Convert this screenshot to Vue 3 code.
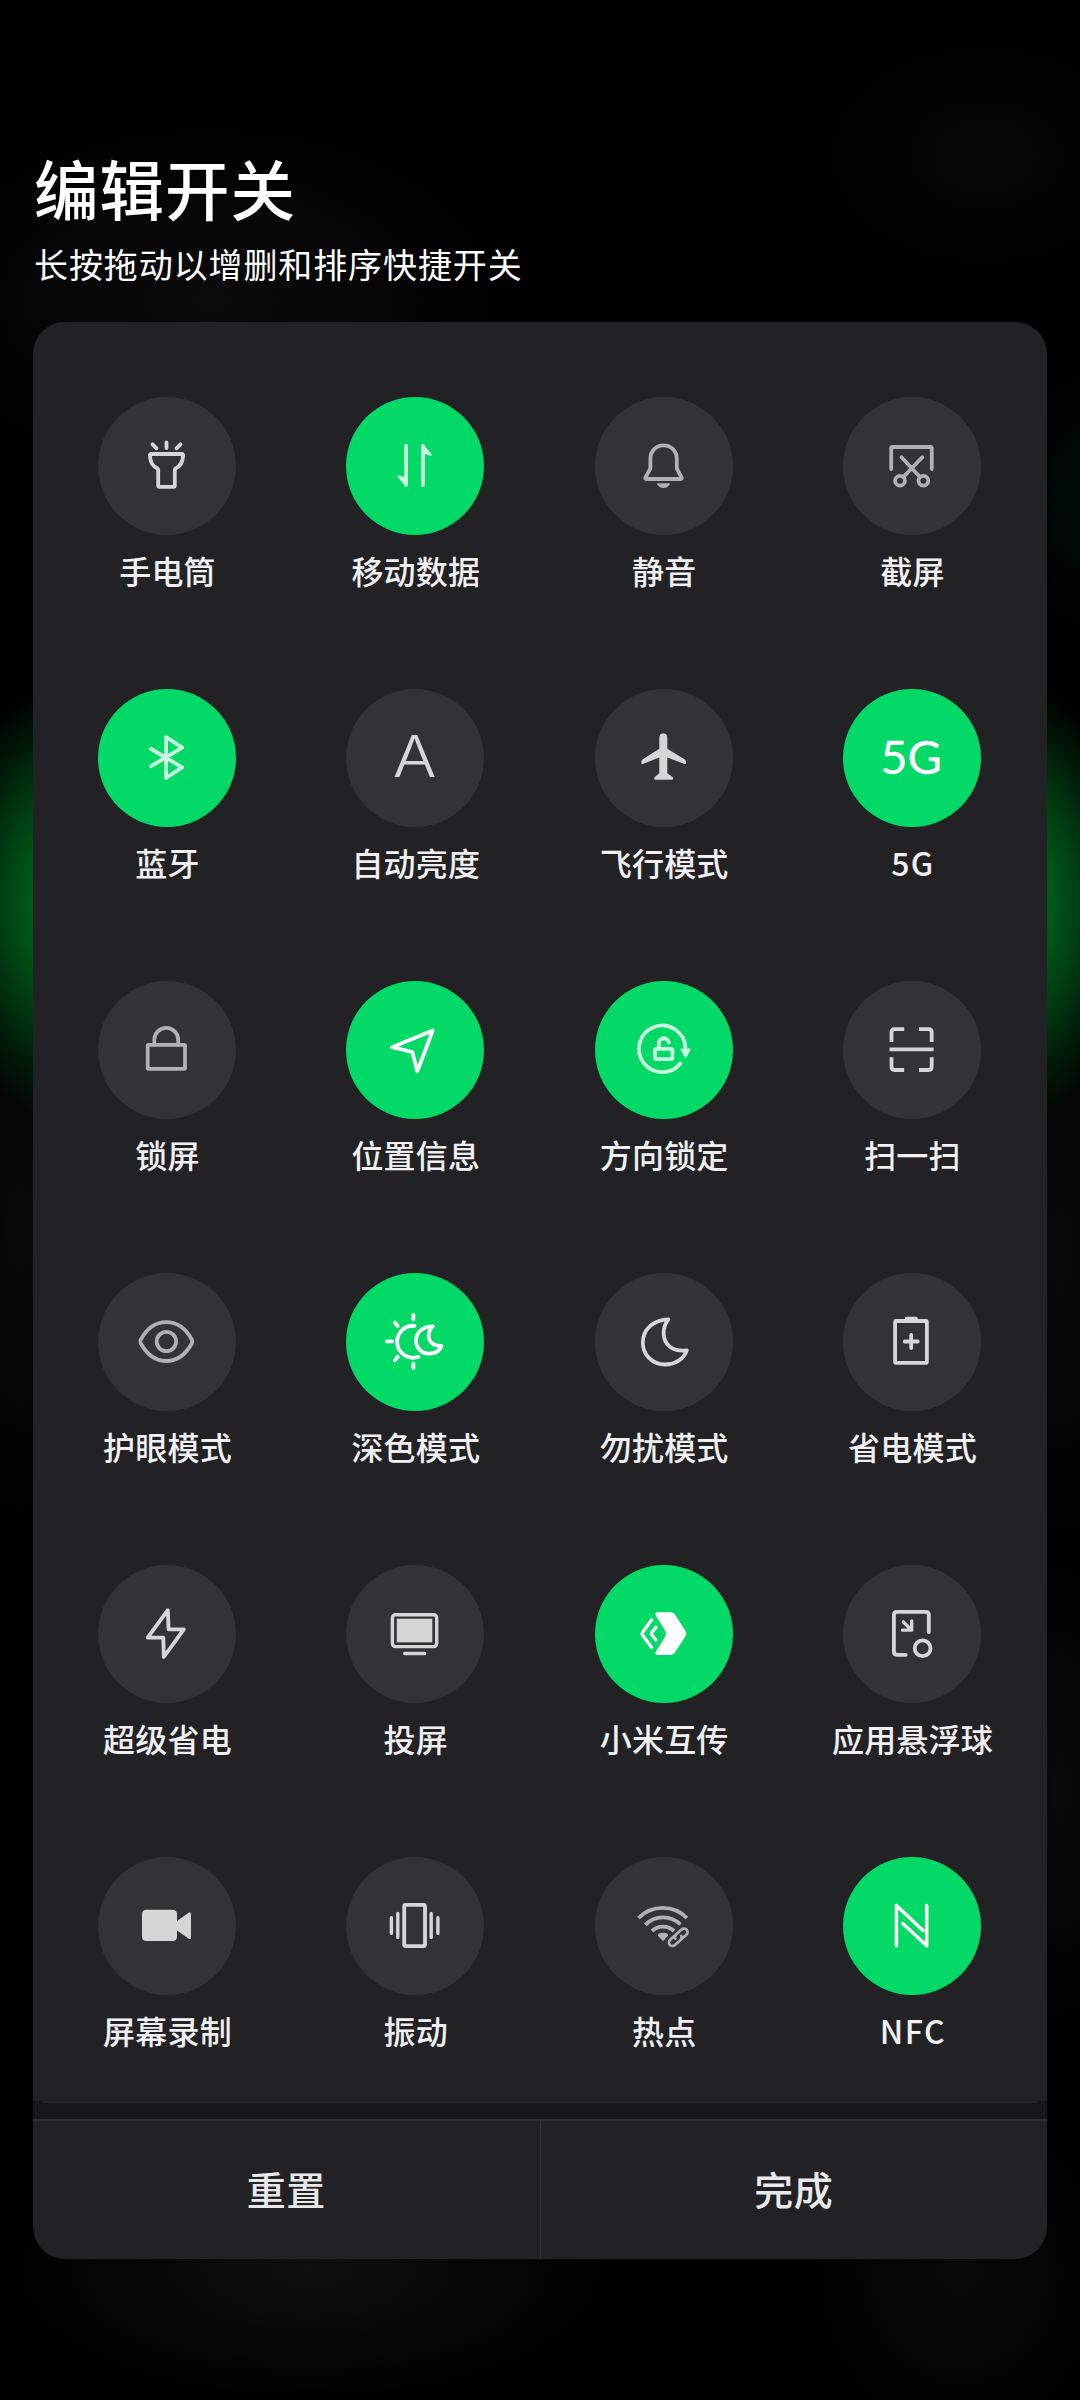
<script setup>
const tiles = [
  { id: 'torch', label: '手电筒', tone: 'bright' },
  { id: 'data', label: '移动数据', on: true, tone: 'mint' },
  { id: 'bell', label: '静音', tone: 'dim' },
  { id: 'screenshot', label: '截屏', tone: 'dim' },
  { id: 'bluetooth', label: '蓝牙', on: true, tone: 'mint' },
  { id: 'auto', label: '自动亮度', tone: 'bright' },
  { id: 'plane', label: '飞行模式', tone: 'bright' },
  { id: 'fiveg', label: '5G', on: true, tone: 'white', latin: true },
  { id: 'lock', label: '锁屏', tone: 'dim' },
  { id: 'location', label: '位置信息', on: true, tone: 'white' },
  { id: 'rotation', label: '方向锁定', on: true, tone: 'mint' },
  { id: 'scan', label: '扫一扫', tone: 'bright' },
  { id: 'eye', label: '护眼模式', tone: 'dim' },
  { id: 'dark', label: '深色模式', on: true, tone: 'white' },
  { id: 'moon', label: '勿扰模式', tone: 'bright' },
  { id: 'battery', label: '省电模式', tone: 'bright' },
  { id: 'bolt', label: '超级省电', tone: 'bright' },
  { id: 'cast', label: '投屏', tone: 'bright' },
  { id: 'share', label: '小米互传', on: true, tone: 'white' },
  { id: 'float', label: '应用悬浮球', tone: 'bright' },
  { id: 'record', label: '屏幕录制', tone: 'bright' },
  { id: 'vibrate', label: '振动', tone: 'bright' },
  { id: 'hotspot', label: '热点', tone: 'dim' },
  { id: 'nfc', label: 'NFC', on: true, tone: 'white', latin: true },
]
</script>

<template>
  <main class="screen">
    <header class="head">
      <h1>编辑开关</h1>
      <p>长按拖动以增删和排序快捷开关</p>
    </header>

    <section class="panel">
      <div class="grid">
        <div v-for="t in tiles" :key="t.id" class="tile">
          <div class="disc" :class="[t.tone, { on: t.on }]">
            <svg viewBox="0 0 138 138" width="138" height="138">
              <g v-if="t.id === 'torch'">
                <path d="M53.2 57H83.8Q85.2 57 85.1 58.5C84.8 65 82 69.500 77.500 71.500Q76.800 72 76.800 73V88.500Q76.800 89.800 75.500 89.800H61.500Q60.200 89.800 60.200 88.500V73Q60.200 72 59.500 71.500C55 69.500 52.200 65 51.900 58.500Q51.800 57 53.200 57Z" />
                <path d="M68.500 45.500V51M54.500 47.300L58.500 51.300M82.500 47.300L78.500 51.300" />
              </g>
              <g v-else-if="t.id === 'data'">
                <path d="M60 49V88M77 49V88" />
                <path class="solid" d="M60 88L52.500 79.300L60 82ZM77 49L84.600 57.700L77 55Z" stroke-width="2.400" />
              </g>
              <g v-else-if="t.id === 'bell'">
                <path d="M50.500 80.300Q49.600 82 51.500 82H85.500Q87.400 82 86.500 80.300L81.800 71.500V61.500A13.200 13.200 0 0 0 55.400 61.500V71.500Z" />
                <path class="fill" d="M61.700 86.300H75.200Q73.500 91 68.500 91T61.700 86.300Z" />
              </g>
              <g v-else-if="t.id === 'screenshot'">
                <path d="M48.200 72V51.500Q48.200 50 49.700 50H87.300Q88.800 50 88.800 51.500V72" />
                <path d="M58.500 60.300L77 80M79.300 60.300L60.300 80" />
                <circle cx="57" cy="83.700" r="4.900" />
                <circle cx="80.400" cy="83.700" r="4.900" />
              </g>
              <path v-else-if="t.id === 'bluetooth'" d="M53 60L84.200 78.300L68 89V48L84.200 58.700L53 77.200" />
              <text v-else-if="t.id === 'auto'" class="letter" transform="translate(68.600 88.200) scale(1.140 1)">A</text>
              <path v-else-if="t.id === 'plane'" class="fill" d="M68.300 44.300Q72.300 44.600 72.300 48.800V59.800L89.500 70.300Q91 71.300 91 73V74Q91 75.300 89.600 74.900L72.300 68.500V84.200L77.300 87.700Q78.200 88.500 78.200 89.500Q78.200 90.800 77 90.800H60.400Q59.200 90.800 59.200 89.500Q59.200 88.500 60.100 87.700L64.300 84.200V68.500L47.700 74.900Q46.300 75.300 46.300 74V73Q46.300 71.300 47.800 70.300L64.300 59.800V48.800Q64.300 44.600 68.300 44.300Z" />
              <text v-else-if="t.id === 'fiveg'" class="network" x="68" y="84.600">5G</text>
              <g v-else-if="t.id === 'lock'">
                <rect x="49.700" y="63.900" width="37.300" height="24" rx="0.800" />
                <path d="M56.300 64V58.800A11.900 11.900 0 0 1 80.200 58.800V64" />
              </g>
              <path v-else-if="t.id === 'location'" d="M86.700 49.500L46 66.200L66.300 71L71.300 90.300Z" />
              <g v-else-if="t.id === 'rotation'">
                <path d="M85.300 82.500A23.300 23.300 0 1 1 90.400 66" />
                <path class="solid" d="M86.500 68.500H94.700L90.600 75.700Z" stroke-width="2" />
                <rect x="60" y="67.800" width="17.400" height="10.300" rx="1" />
                <path d="M63.800 67V61.800A5.100 5.100 0 0 1 73.900 61.500" />
              </g>
              <g v-else-if="t.id === 'scan'" class="square">
                <path d="M48.500 61V51.500Q48.500 48.200 51.800 48.200H61.200M76 48.200H85.400Q88.700 48.200 88.700 51.500V61M88.700 76.200V85.700Q88.700 89 85.400 89H76M61.200 89H51.800Q48.500 89 48.500 85.700V76.200M46.500 68.400H90.600" />
              </g>
              <g v-else-if="t.id === 'eye'">
                <path d="M42.600 70Q41.800 68.500 42.600 67C48.500 56 57.500 49.200 68.300 49.200S88.100 56 94 67Q94.800 68.500 94 70C88.100 81 79.100 88 68.300 88S48.500 81 42.600 70Z" />
                <circle cx="68.400" cy="68.500" r="9.700" />
              </g>
              <g v-else-if="t.id === 'dark'">
                <path d="M67.400 42V46.300M67.400 90.700V95M41 68.400H46M48.900 49.600L51.700 53M48.900 87.200L51.700 83.800" />
                <path d="M68.500 52.800A16 16 0 1 0 72.500 83.800" />
                <path d="M86.800 53.300C77.500 53.300 70 58.800 70 67.500C70 75 75.500 80.600 83 80.600C89.500 80.600 94 77.500 95.500 72.800C88 73.500 82.700 69.500 82.700 62.500C82.700 58.500 84.200 55.500 86.800 53.300Z" />
              </g>
              <path v-else-if="t.id === 'moon'" d="M73.400 46.300C58.500 46.600 47.800 56.500 47.800 69.500C47.800 82 57.500 91.500 70 91.500C80.500 91.500 88.800 86 91.800 77.300C78.500 79 68.700 72.500 68.700 60C68.700 54.500 70.400 50 73.400 46.300Z" />
              <g v-else-if="t.id === 'battery'">
                <rect x="52.100" y="48" width="31.800" height="41.800" rx="1" />
                <path d="M63.700 45.600H72.900M68.200 62V75M61.700 68.500H74.700" />
              </g>
              <path v-else-if="t.id === 'bolt'" d="M69.800 45.200L49.700 72.600H65.300L65.800 92L85.800 64.400H70.600Z" />
              <g v-else-if="t.id === 'cast'">
                <rect x="46.400" y="49.700" width="44.300" height="31.900" rx="3" stroke-width="3.400" />
                <rect class="fill" x="50.800" y="53.700" width="35.500" height="23.600" />
                <path d="M58.800 88.500H78.500" stroke-width="3.600" />
              </g>
              <g v-else-if="t.id === 'share'">
                <path class="fill" d="M62.300 47.200H75.500Q78.300 47.200 79.900 49.600L90.300 65.800Q92.100 68.700 90.300 71.600L79.900 87.600Q78.300 90 75.500 90H62.300Q59.300 89.500 60.800 86.700L70.200 71.600Q71.900 68.700 70.200 65.800L60.800 50.500Q59.300 47.700 62.300 47.200Z" />
                <path d="M56.700 54.800L47.600 67.200Q46.500 68.700 47.600 70.200L56.700 82.400M61 62.300L56.800 67.600Q56 68.700 56.800 69.800L61 75" stroke-width="3.300" />
              </g>
              <g v-else-if="t.id === 'float'">
                <path d="M85.800 67V49.900Q85.800 46.900 82.800 46.900H53.900Q50.900 46.900 50.900 49.900V86.800Q50.900 89.800 53.900 89.800H62.700" />
                <circle cx="79.600" cy="83.300" r="7.900" />
                <path d="M60.300 56.800L67.500 64M68.700 56V65.200H59.500" stroke-width="3.300" />
              </g>
              <path v-else-if="t.id === 'record'" class="fill" d="M48.500 52.700H74.500Q79 52.700 79 57.200V64L90.500 55.700Q93 54.200 93 57.200V80Q93 83 90.500 81.500L79 73.500V79.500Q79 84 74.500 84H48.500Q44 84 44 79.500V57.200Q44 52.700 48.500 52.700Z" />
              <g v-else-if="t.id === 'vibrate'">
                <rect x="58.200" y="47.900" width="20.800" height="41.200" rx="1.500" />
                <path d="M51.800 56.500V80.600M45.400 60.800V76.400M85.200 56.500V80.600M91.900 60.800V76.400" stroke-width="3.400" />
              </g>
              <g v-else-if="t.id === 'hotspot'">
                <path class="butt" d="M43.500 61A34 34 0 0 1 92 61M50.300 67.800A25 25 0 0 1 85.500 67.500M57 74A16 16 0 0 1 79 74" />
                <path class="fill" d="M68 84.300L63 78.700Q62.300 75.800 68 75.800T73 78.700Z" />
                <g transform="rotate(-42 83.200 80.300)" stroke-width="2.700">
                  <path d="M82 76.700H75.600A3.600 3.600 0 0 0 75.600 83.900H83.200A3.600 3.600 0 0 0 86.400 81.300M84.600 83.900H91A3.600 3.600 0 0 0 91 76.700H83.400A3.600 3.600 0 0 0 80.200 79.300" />
                </g>
              </g>
              <path v-else d="M53.400 88.800V48.500L80 73.500M59.800 66.500L83.700 88.800V48.500" stroke-width="3.500" />
            </svg>
          </div>
          <span class="label" :class="{ latin: t.latin }">{{ t.label }}</span>
        </div>
      </div>
      <div class="gap"><i></i></div>
      <footer class="actions">
        <button>重置</button>
        <button>完成</button>
      </footer>
    </section>
  </main>
</template>

<style>
body {
  background: #000;
}
</style>

<style scoped>
.screen {
  box-sizing: border-box;
  width: 1080px;
  height: 2400px;
  padding: 143px 33px 0;
  overflow: hidden;
  font-family: "Noto Sans CJK SC", "Noto Sans", sans-serif;
  color: #fff;
  background:
    radial-gradient(ellipse 130px 222px at 68px 904px, #00691f 0%, #00591b 28%, #003a11 55%, #001a08 78%, transparent 100%),
    radial-gradient(ellipse 130px 222px at 1012px 904px, #00691f 0%, #00591b 28%, #003a11 55%, #001a08 78%, transparent 100%),
    radial-gradient(ellipse 60px 130px at 1080px 500px, #000c06, transparent),
    radial-gradient(ellipse 300px 180px at 210px 300px, #0b0b0b, transparent),
    radial-gradient(ellipse 170px 120px at 985px 155px, #060606, transparent),
    radial-gradient(ellipse 300px 130px at 310px 2270px, #101010, transparent),
    radial-gradient(ellipse 150px 170px at 960px 2270px, #0a0a0a, transparent),
    radial-gradient(ellipse 90px 300px at 1060px 1250px, #0a0a0a, transparent),
    radial-gradient(ellipse 90px 300px at 20px 1230px, #0a0a0a, transparent),
    radial-gradient(ellipse 70px 240px at 1060px 1790px, #0a0a0a, transparent),
    #000;
}
.head {
  height: 179px;
}
h1 {
  margin: 0 0 0 1px;
  font-size: 64.500px;
  line-height: 89px;
  font-weight: 500;
  letter-spacing: 1px;
}
p {
  margin: 8px 0 0 1px;
  font-size: 34px;
  line-height: 48px;
  font-weight: 400;
  letter-spacing: 0.900px;
}
.panel {
  height: 1937px;
  border-radius: 32px;
  overflow: hidden;
  background: #222224;
}
.grid {
  box-sizing: border-box;
  height: 1779px;
  padding: 75px 0 0 9.830px;
  display: grid;
  grid-template-columns: repeat(4, 248.330px);
  grid-auto-rows: 292px;
}
.tile {
  display: flex;
  flex-direction: column;
  align-items: center;
}
.disc {
  width: 138px;
  height: 138px;
  border-radius: 50%;
  background: #333335;
}
.disc.on {
  background: #03d967;
}
.bright { color: #d6d6d6; }
.dim { color: #b1b1b2; }
.mint { color: #c8f9df; }
.white { color: #fff; }
svg {
  display: block;
  fill: none;
  stroke: currentColor;
  stroke-width: 3.800;
  stroke-linecap: round;
  stroke-linejoin: round;
}
.fill {
  fill: currentColor;
  stroke: none;
}
.solid {
  fill: currentColor;
}
.square,
.butt {
  stroke-linecap: butt;
}
.letter,
.network {
  fill: currentColor;
  text-anchor: middle;
}
.letter {
  font: 300 57px Inter, sans-serif;
  stroke: none;
}
.network {
  font: 400 47px Lato, sans-serif;
  stroke-width: 0.300;
}
.label {
  margin-top: 12px;
  padding-left: 1px;
  font-size: 32px;
  line-height: 46px;
  font-weight: 500;
  letter-spacing: 0.200px;
  color: #f0f0f2;
  white-space: nowrap;
}
.latin {
  padding-left: 2px;
  letter-spacing: 1.500px;
}
.gap {
  height: 18px;
  padding: 0 10px;
  background: #171719;
}
.gap i {
  display: block;
  height: 2px;
  background: #242426;
}
.actions {
  box-sizing: border-box;
  height: 140px;
  display: flex;
  border-top: 2px solid #323234;
}
button {
  flex: 1;
  padding: 0 0 4px;
  border: 0;
  background: none;
  color: #e9e9eb;
  font: 500 39px "Noto Sans CJK SC", sans-serif;
  letter-spacing: 0.500px;
}
button + button {
  border-left: 1px solid #323234;
}
</style>
